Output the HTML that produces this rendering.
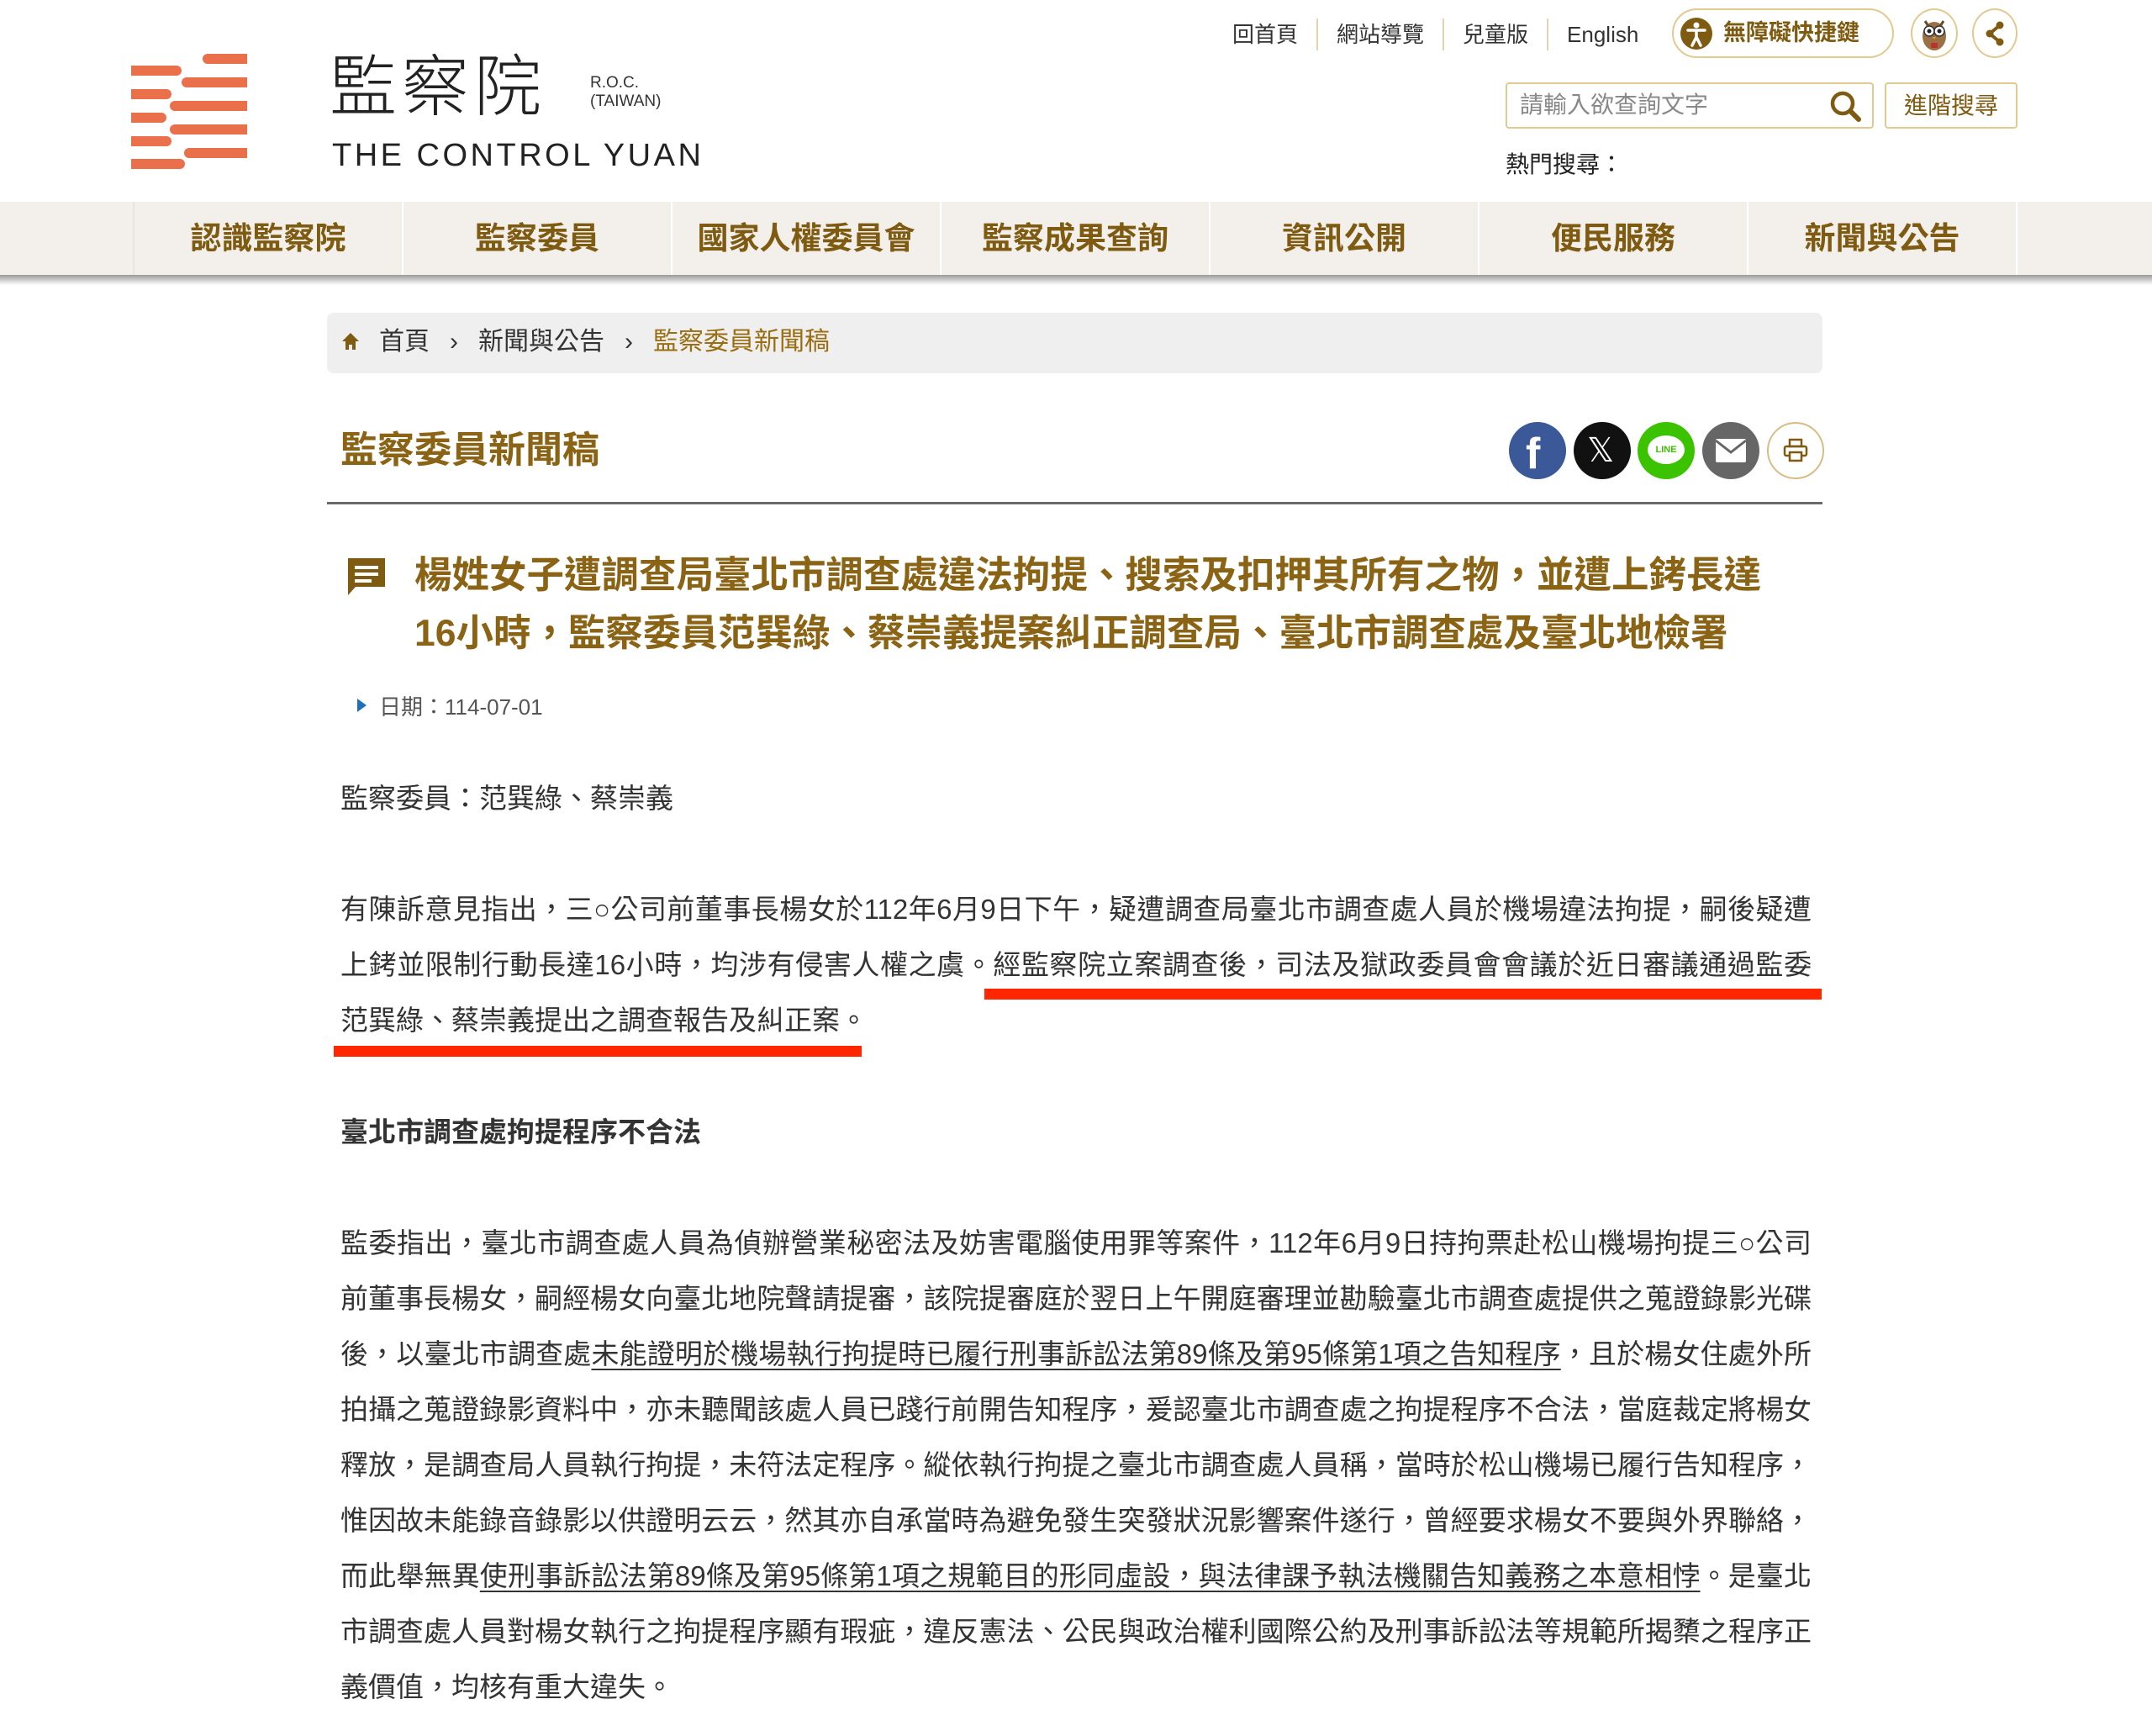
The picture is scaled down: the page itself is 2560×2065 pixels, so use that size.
<!DOCTYPE html>
<html><head><meta charset="utf-8">
<style>
*{margin:0;padding:0;box-sizing:border-box}
body{width:2560px;height:2065px;background:#fff;position:relative;overflow:hidden;font-family:"Liberation Sans","Noto Sans CJK TC",sans-serif;color:#333}
.a{position:absolute}
.bar{position:absolute;background:#e9704a;height:12px}
.top a{color:#333;text-decoration:none}
.nav{position:absolute;left:158px;top:240px;width:2242px;height:87px;background:#f3f0ec;display:flex}
.nav div{flex:1;border-left:2px solid #fff;text-align:center;line-height:87px;font-size:37px;font-weight:bold;color:#7f5b12}
.nav div:first-child{border-left:2px solid #e8e4df}
.ln{white-space:nowrap;text-align:justify;text-align-last:justify;height:66px;line-height:66px}
.ln.e{text-align-last:left}
.body{position:absolute;left:405px;width:1750px;font-size:33px;color:#333}
u{text-decoration:underline;text-decoration-thickness:2px;text-underline-offset:6px}
.ic{position:absolute;top:502px;width:68px;height:68px;border-radius:50%}
</style></head><body>

<!-- logo -->
<div class="bar" style="left:241px;top:64px;width:53px;border-radius:7px 0 0 7px"></div>
<div class="bar" style="left:156px;top:78px;width:60px;border-radius:0 7px 7px 0"></div>
<div class="bar" style="left:216px;top:92px;width:78px;border-radius:7px 0 0 7px"></div>
<div class="bar" style="left:156px;top:106px;width:48px;border-radius:0 7px 7px 0"></div>
<div class="bar" style="left:202px;top:120px;width:92px;border-radius:7px 0 0 7px"></div>
<div class="bar" style="left:156px;top:134px;width:42px;border-radius:0 7px 7px 0"></div>
<div class="bar" style="left:202px;top:148px;width:92px;border-radius:7px 0 0 7px"></div>
<div class="bar" style="left:156px;top:162px;width:48px;border-radius:0 7px 7px 0"></div>
<div class="bar" style="left:219px;top:176px;width:75px;border-radius:7px 0 0 7px"></div>
<div class="bar" style="left:156px;top:189px;width:64px;border-radius:0 7px 7px 0"></div>

<div class="a" style="left:392px;top:52px;font-size:80px;line-height:90px;color:#222;letter-spacing:6px;font-weight:300;font-family:'Noto Sans CJK TC',sans-serif">監察院</div>
<div class="a" style="left:702px;top:88px;font-size:19px;line-height:22px;color:#333">R.O.C.<br>(TAIWAN)</div>
<div class="a" style="left:395px;top:165px;font-size:38px;line-height:40px;color:#222;letter-spacing:3.5px">THE CONTROL YUAN</div>

<!-- top links -->
<div class="a top" style="left:1466px;top:22px;font-size:26px;line-height:38px;display:flex;color:#333">
<span>回首頁</span><span style="width:2px;height:38px;background:#e6d3ad;margin:0 22px"></span>
<span>網站導覽</span><span style="width:2px;height:38px;background:#e6d3ad;margin:0 22px"></span>
<span>兒童版</span><span style="width:2px;height:38px;background:#e6d3ad;margin:0 22px"></span>
<span>English</span></div>
<div class="a" style="left:1989px;top:10px;width:264px;height:59px;border:2px solid #e2c98f;border-radius:30px"></div>
<div class="a" style="left:1999px;top:21px;width:38px;height:38px;border-radius:50%;background:#7f5b12"></div>
<svg class="a" style="left:1999px;top:21px" width="38" height="38" viewBox="0 0 38 38"><circle cx="19" cy="9" r="3.5" fill="#fff"/><path d="M9 15h20M19 15v8M19 23l-5 10M19 23l5 10" stroke="#fff" stroke-width="3.5" fill="none" stroke-linecap="round"/></svg>
<div class="a" style="left:2050px;top:20px;font-size:27px;font-weight:bold;color:#7f5b12;line-height:38px">無障礙快捷鍵</div>
<div class="a" style="left:2273px;top:10px;width:56px;height:59px;border:2px solid #e2c98f;border-radius:50%"></div>
<svg class="a" style="left:2280px;top:17px" width="42" height="46" viewBox="0 0 42 46"><ellipse cx="21" cy="26" rx="14" ry="17" fill="#9a7045"/><circle cx="15" cy="20" r="6" fill="#fff" stroke="#333" stroke-width="1.5"/><circle cx="27" cy="20" r="6" fill="#fff" stroke="#333" stroke-width="1.5"/><circle cx="15" cy="20" r="2.5" fill="#222"/><circle cx="27" cy="20" r="2.5" fill="#222"/><path d="M19 27l2 3 2-3z" fill="#e8a030"/><path d="M10 8l4 6M32 8l-4 6" stroke="#6b4a2a" stroke-width="3"/><rect x="17" y="34" width="8" height="6" fill="#c03030"/></svg>
<div class="a" style="left:2346px;top:10px;width:54px;height:59px;border:2px solid #e2c98f;border-radius:50%"></div>
<svg class="a" style="left:2358px;top:24px" width="30" height="32" viewBox="0 0 30 32"><path d="M21 6L9 16l12 10" stroke="#7f5b12" stroke-width="4" fill="none"/><circle cx="21" cy="6" r="4.5" fill="#7f5b12"/><circle cx="9" cy="16" r="4.5" fill="#7f5b12"/><circle cx="21" cy="26" r="4.5" fill="#7f5b12"/></svg>

<!-- search -->
<div class="a" style="left:1791px;top:98px;width:438px;height:55px;border:2px solid #e2c98f;border-radius:4px"></div>
<div class="a" style="left:1808px;top:106px;font-size:28px;line-height:38px;color:#888">請輸入欲查詢文字</div>
<svg class="a" style="left:2173px;top:104px" width="44" height="44" viewBox="0 0 44 44"><circle cx="19" cy="19" r="12" stroke="#7f5b12" stroke-width="4.5" fill="none"/><path d="M28 28l10 10" stroke="#7f5b12" stroke-width="6" stroke-linecap="round"/></svg>
<div class="a" style="left:2242px;top:98px;width:158px;height:55px;border:2px solid #e2c98f;border-radius:4px;text-align:center;line-height:51px;font-size:28px;color:#7f5b12">進階搜尋</div>
<div class="a" style="left:1791px;top:176px;font-size:28px;line-height:40px;color:#222">熱門搜尋：</div>

<!-- nav -->
<div class="nav"><div>認識監察院</div><div>監察委員</div><div>國家人權委員會</div><div>監察成果查詢</div><div>資訊公開</div><div>便民服務</div><div style="border-right:2px solid #fff">新聞與公告</div></div>
<div class="a" style="left:0;top:327px;width:2560px;height:12px;background:linear-gradient(#9a9a9a,rgba(255,255,255,0))"></div>
<div class="a" style="left:0;top:240px;width:158px;height:87px;background:#f3f0ec"></div>
<div class="a" style="left:2400px;top:240px;width:160px;height:87px;background:#f3f0ec"></div>

<!-- breadcrumb -->
<div class="a" style="left:389px;top:372px;width:1779px;height:72px;background:#efefef;border-radius:8px"></div>
<svg class="a" style="left:405px;top:394px" width="24" height="24" viewBox="0 0 24 24"><path d="M12 2L2 12h4v10h4v-6h4v6h4V12h4z" fill="#7f5b12"/></svg>
<div class="a" style="left:451px;top:387px;font-size:30px;line-height:40px;color:#333;white-space:nowrap">首頁<span style="margin:0 24px">›</span>新聞與公告<span style="margin:0 24px">›</span><span style="color:#9a6d10">監察委員新聞稿</span></div>

<!-- title -->
<div class="a" style="left:405px;top:508px;font-size:44px;line-height:56px;font-weight:bold;color:#8a6314">監察委員新聞稿</div>
<div class="ic" style="left:1795px;background:#3b5998"></div>
<div class="a" style="left:1815px;top:510px;font-size:52px;font-weight:bold;color:#fff;line-height:60px;font-family:'Liberation Sans'">f</div>
<div class="ic" style="left:1872px;background:#111"></div>
<div class="a" style="left:1888px;top:516px;font-size:40px;color:#fff;line-height:40px">𝕏</div>
<div class="ic" style="left:1948px;background:#3cc300"></div>
<div class="a" style="left:1960px;top:518px;width:44px;height:34px;background:#fff;border-radius:50%;font-size:11px;font-weight:bold;color:#3cc300;text-align:center;line-height:34px">LINE</div>
<div class="ic" style="left:2025px;background:#666"></div>
<svg class="a" style="left:2040px;top:521px" width="38" height="30" viewBox="0 0 38 30"><rect x="1" y="1" width="36" height="28" rx="2" fill="#fff"/><path d="M1 3l18 14 18-14" stroke="#666" stroke-width="3" fill="none"/></svg>
<div class="ic" style="left:2102px;border:2px solid #d8bc85;background:#fff"></div>
<svg class="a" style="left:2120px;top:520px" width="32" height="32" viewBox="0 0 32 32"><rect x="9" y="3" width="14" height="8" fill="none" stroke="#7f5b12" stroke-width="2.5"/><rect x="3" y="11" width="26" height="11" rx="2" fill="none" stroke="#7f5b12" stroke-width="2.5"/><rect x="9" y="18" width="14" height="10" fill="#fff" stroke="#7f5b12" stroke-width="2.5"/></svg>
<div class="a" style="left:389px;top:597px;width:1779px;height:3px;background:#6a6a6a"></div>

<!-- headline -->
<svg class="a" style="left:411px;top:661px" width="50" height="50" viewBox="0 0 50 50"><path d="M3 3h44v34H12L3 47z" fill="#7f5b12"/><rect x="11" y="12" width="28" height="4" fill="#fff"/><rect x="11" y="20" width="28" height="4" fill="#fff"/><rect x="11" y="28" width="20" height="4" fill="#fff"/></svg>
<div class="a" style="left:493px;top:650px;font-size:44.5px;line-height:69px;font-weight:bold;color:#8a6314;white-space:nowrap">楊姓女子遭調查局臺北市調查處違法拘提、搜索及扣押其所有之物，並遭上銬長達<br>16小時，監察委員范巽綠、蔡崇義提案糾正調查局、臺北市調查處及臺北地檢署</div>

<div class="a" style="left:425px;top:831px;width:0;height:0;border-left:11px solid #1d6fc0;border-top:8px solid transparent;border-bottom:8px solid transparent"></div>
<div class="a" style="left:451px;top:823px;font-size:26px;line-height:36px;color:#555">日期：114-07-01</div>

<div class="body" style="top:917px"><div class="ln e">監察委員：范巽綠、蔡崇義</div></div>

<div class="body" style="top:1049px">
<div class="ln">有陳訴意見指出，三○公司前董事長楊女於112年6月9日下午，疑遭調查局臺北市調查處人員於機場違法拘提，嗣後疑遭</div>
<div class="ln">上銬並限制行動長達16小時，均涉有侵害人權之虞。經監察院立案調查後，司法及獄政委員會會議於近日審議通過監委</div>
<div class="ln e">范巽綠、蔡崇義提出之調查報告及糾正案。</div>
</div>
<div class="a" style="left:1171px;top:1176px;width:996px;height:13px;background:#ff2600"></div>
<div class="a" style="left:397px;top:1244px;width:628px;height:13px;background:#ff2600"></div>

<div class="body" style="top:1314px;font-weight:bold;color:#333"><div class="ln e">臺北市調查處拘提程序不合法</div></div>

<div class="body" style="top:1446px">
<div class="ln">監委指出，臺北市調查處人員為偵辦營業秘密法及妨害電腦使用罪等案件，112年6月9日持拘票赴松山機場拘提三○公司</div>
<div class="ln">前董事長楊女，嗣經楊女向臺北地院聲請提審，該院提審庭於翌日上午開庭審理並勘驗臺北市調查處提供之蒐證錄影光碟</div>
<div class="ln">後，以臺北市調查處<u>未能證明於機場執行拘提時已履行刑事訴訟法第89條及第95條第1項之告知程序</u>，且於楊女住處外所</div>
<div class="ln">拍攝之蒐證錄影資料中，亦未聽聞該處人員已踐行前開告知程序，爰認臺北市調查處之拘提程序不合法，當庭裁定將楊女</div>
<div class="ln">釋放，是調查局人員執行拘提，未符法定程序。縱依執行拘提之臺北市調查處人員稱，當時於松山機場已履行告知程序，</div>
<div class="ln">惟因故未能錄音錄影以供證明云云，然其亦自承當時為避免發生突發狀況影響案件遂行，曾經要求楊女不要與外界聯絡，</div>
<div class="ln">而此舉無異<u>使刑事訴訟法第89條及第95條第1項之規範目的形同虛設，與法律課予執法機關告知義務之本意相悖</u>。是臺北</div>
<div class="ln">市調查處人員對楊女執行之拘提程序顯有瑕疵，違反憲法、公民與政治權利國際公約及刑事訴訟法等規範所揭櫫之程序正</div>
<div class="ln e">義價值，均核有重大違失。</div>
</div>
</body></html>
